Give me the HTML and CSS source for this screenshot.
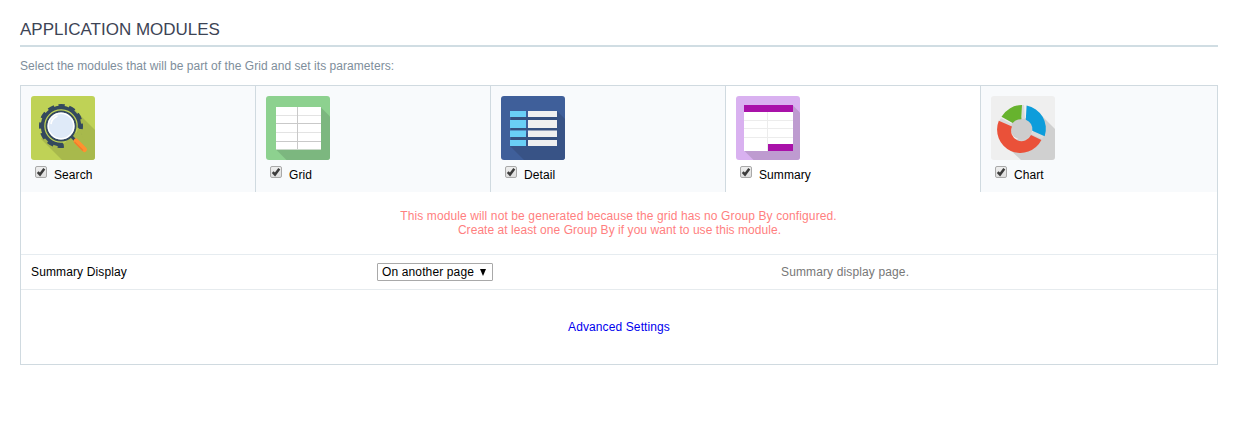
FILE: index.html
```html
<!DOCTYPE html>
<html lang="en">
<head>
<meta charset="utf-8">
<title>Application Modules</title>
<link rel="stylesheet" href="styles.css">
</head>
<body>
<svg class="defs" width="0" height="0">
  <defs>
    <symbol id="tick" viewBox="0 0 12 12"><path d="M2.700 6.200 5 8.500 9.300 2.800" fill="none" stroke="#3c3c3c" stroke-width="2.500"/></symbol>
  </defs>
</svg>
<main class="page">
  <h1 class="title">APPLICATION MODULES</h1>
  <p class="intro">Select the modules that will be part of the Grid and set its parameters:</p>
  <section class="panel">
    <div class="tabs">
      <div class="tab">
        <svg class="icon" viewBox="0 0 64 64">
          <rect width="64" height="64" rx="3" fill="#bfd256"/>
          <path d="M43 13 64 34V61a3 3 0 0 1-3 3H31L10 43Z" fill="#a8b94c"/>
          <circle cx="30" cy="30" r="17" fill="#bfd256"/>
          <g fill="none" stroke="#34495e">
            <path d="M32 48.400A18.500 18.500 0 1 1 48.400 32" stroke-width="3.400"/>
            <circle cx="30" cy="30" r="20" stroke-width="4" stroke-dasharray="6.200 4.272" stroke-dashoffset="3.100"/>
          </g>
          <path d="m33.500 53 1-7 8-8 7-3 4 10-10 10z" fill="#a8b94c"/>
          <path d="m40.500 40.500 4 4" stroke="#34495e" stroke-width="2.800"/>
          <circle cx="30" cy="30" r="14.500" fill="#dfeaf8" stroke="#34495e" stroke-width="2"/>
          <circle cx="30" cy="30" r="12.800" fill="none" stroke="#fff" stroke-width="1.500"/>
          <path d="M20 28a10 10 0 0 1 6.500-8" fill="none" stroke="#fff" stroke-width="1.800"/>
          <path d="m45 45 8.500 8.500" stroke="#ff9130" stroke-width="5" stroke-linecap="round"/>
          <path d="m43.500 46 8.500 8.500" stroke="#f07d2c" stroke-width="1.400"/>
        </svg>
        <div class="check"><span class="box"><svg class="mark"><use href="#tick"/></svg></span><span>Search</span></div>
      </div>
      <div class="tab">
        <svg class="icon" viewBox="0 0 64 64">
          <rect width="64" height="64" rx="3" fill="#8dd18f"/>
          <path d="M55 11.500 64 20.500V61a3 3 0 0 1-3 3H20.500L10 53.500Z" fill="#7cb77f"/>
          <path d="M10 11h45v43H10z" fill="#fff"/>
          <path d="M10 19.500h45M10 36.500h45" stroke="#e3e3e3"/>
          <path d="M10 27.500h45M10 45.500h45M31.500 11v43" stroke="#c9c9c9"/>
          <path d="M10 53.500h45" stroke="#c9d8c9"/>
        </svg>
        <div class="check"><span class="box"><svg class="mark"><use href="#tick"/></svg></span><span>Grid</span></div>
      </div>
      <div class="tab">
        <svg class="icon" viewBox="0 0 64 64">
          <rect width="64" height="64" rx="3" fill="#3f5f9a"/>
          <path d="M56 15 64 23V61a3 3 0 0 1-3 3H23L9 50Z" fill="#385386"/>
          <path d="M10 21h46v3H10zM10 32h46v2H10zM10 41h46v3H10z" fill="#36507f"/>
          <path d="M9 15h16v6H9zM9 24h16v8H9zM9 34.500h16v6.500H9zM9 44h16v6H9z" fill="#6acff6"/>
          <path d="M27 15h29v6H27zM27 24h29v8H27zM27 34.500h29v6.500H27zM27 44h29v6H27z" fill="#efefef"/>
        </svg>
        <div class="check"><span class="box"><svg class="mark"><use href="#tick"/></svg></span><span>Detail</span></div>
      </div>
      <div class="tab tab-wide tab-active">
        <svg class="icon" viewBox="0 0 64 64">
          <rect width="64" height="64" rx="3" fill="#d9b1f0"/>
          <path d="M57 9.500 64 16.500V61a3 3 0 0 1-3 3H17.500L8 54.500Z" fill="#be9bd0"/>
          <path d="M8 9h49v46H8z" fill="#fff"/>
          <path d="M8 24.500h49M8 32.500h49M8 41.500h49M31.500 16v39" stroke="#ececec"/>
          <path d="M8 9h49v7H8zM32 48h25v7H32z" fill="#a911a9"/>
        </svg>
        <div class="check"><span class="box"><svg class="mark"><use href="#tick"/></svg></span><span>Summary</span></div>
      </div>
      <div class="tab tab-last">
        <svg class="icon" viewBox="0 0 64 64">
          <rect width="64" height="64" rx="3" fill="#efefef"/>
          <path d="M47 16 64 33V61a3 3 0 0 1-3 3H30L13 48 30 42 42 37Z" fill="#d0d0d0"/>
          <circle cx="30.500" cy="32.500" r="11" fill="#cdcdcd"/>
          <path d="M31 9h2l1 14h-3zM42 35l11 5-2 3-11-5zM8 25l2-3 11 6-1 3z" fill="#dadada"/>
          <path d="M7.800 24.700A23.400 23.400 0 0 0 50.400 44L40 39A10 10 0 0 1 21 30.600Z" fill="#ea5139"/>
          <path d="M10.500 20.800A23.500 23.500 0 0 1 31 9L30.300 23.200A11 11 0 0 0 21.700 27Z" fill="#67b32e"/>
          <path d="M35.600 9.600A23.700 23.700 0 0 1 53.700 40.300L41.300 34.700A10 10 0 0 0 34.800 23.800Z" fill="#0d9ddb"/>
        </svg>
        <div class="check"><span class="box"><svg class="mark"><use href="#tick"/></svg></span><span>Chart</span></div>
      </div>
    </div>
    <div class="warning"><div class="warning-main">This module will not be generated because the grid has no Group By configured.</div><div class="warning-help">Create at least one Group By if you want to use this module.</div></div>
    <div class="row">
      <span class="label">Summary Display</span>
      <div class="field"><span class="select"><span>On another page</span><svg class="arrow" viewBox="0 0 6 7"><path d="M0 0h6L3 7z"/></svg></span></div>
      <span class="hint">Summary display page.</span>
    </div>
    <div class="advanced"><a class="link">Advanced Settings</a></div>
  </section>
</main>
</body>
</html>
```
FILE: styles.css
```css
* { box-sizing: border-box; }
body {
  margin: 0;
  background: #fff;
  color: #000;
  font: 12px/14px "Liberation Sans", Arial, sans-serif;
}
.defs { display: block; }
.page { padding: 20px 20px 0; }
.title {
  margin: 0;
  height: 27px;
  border-bottom: 2px solid #d0dde3;
  color: #3d4455;
  font-size: 17px;
  font-weight: 400;
  line-height: 19px;
}
.intro { margin: 12px 0; color: #7e8e9b; letter-spacing: .045px; }
.panel { height: 280px; border: 1px solid #d0dae0; }
.tabs { display: flex; height: 106px; }
.tab {
  width: 235px;
  padding: 10px;
  border-right: 1px solid #d0dae0;
  background: #f8fafc;
}
.tab-wide { width: 255px; }
.tab-active { background: #fff; }
.tab-last { flex: 1; border-right: 0; }
.icon { display: block; width: 64px; height: 64px; }
.check { display: flex; gap: 7px; padding: 6px 0 0 4px; line-height: 19px; letter-spacing: .08px; }
.box {
  width: 12px;
  height: 12px;
  border: 1px solid #a9a9a9;
  border-radius: 2px;
  background: linear-gradient(#eee, #dedede);
}
.mark { display: block; width: 12px; height: 12px; margin: -1px; }
.warning {
  height: 63px;
  padding-top: 17px;
  border-bottom: 1px solid #e6ecf0;
  color: #ff7f7f;
  text-align: center;
}
.warning-main { padding-right: 1px; letter-spacing: .115px; }
.warning-help { padding-left: 1px; letter-spacing: .05px; }
.row {
  display: flex;
  align-items: center;
  height: 35px;
  padding-left: 10px;
  border-bottom: 1px solid #e6ebee;
}
.label { width: 346px; letter-spacing: .13px; }
.field { width: 404px; }
.select {
  display: flex;
  align-items: center;
  justify-content: space-between;
  width: 116px;
  height: 18px;
  padding: 0 6px 0 4px;
  border: 1px solid #a9a9a9;
  border-radius: 1px;
  letter-spacing: .13px;
}
.arrow { width: 6px; height: 7px; }
.hint { color: #777; letter-spacing: .13px; }
.advanced { padding-top: 30px; text-align: center; }
.link { color: #00e; letter-spacing: .11px; }
```
